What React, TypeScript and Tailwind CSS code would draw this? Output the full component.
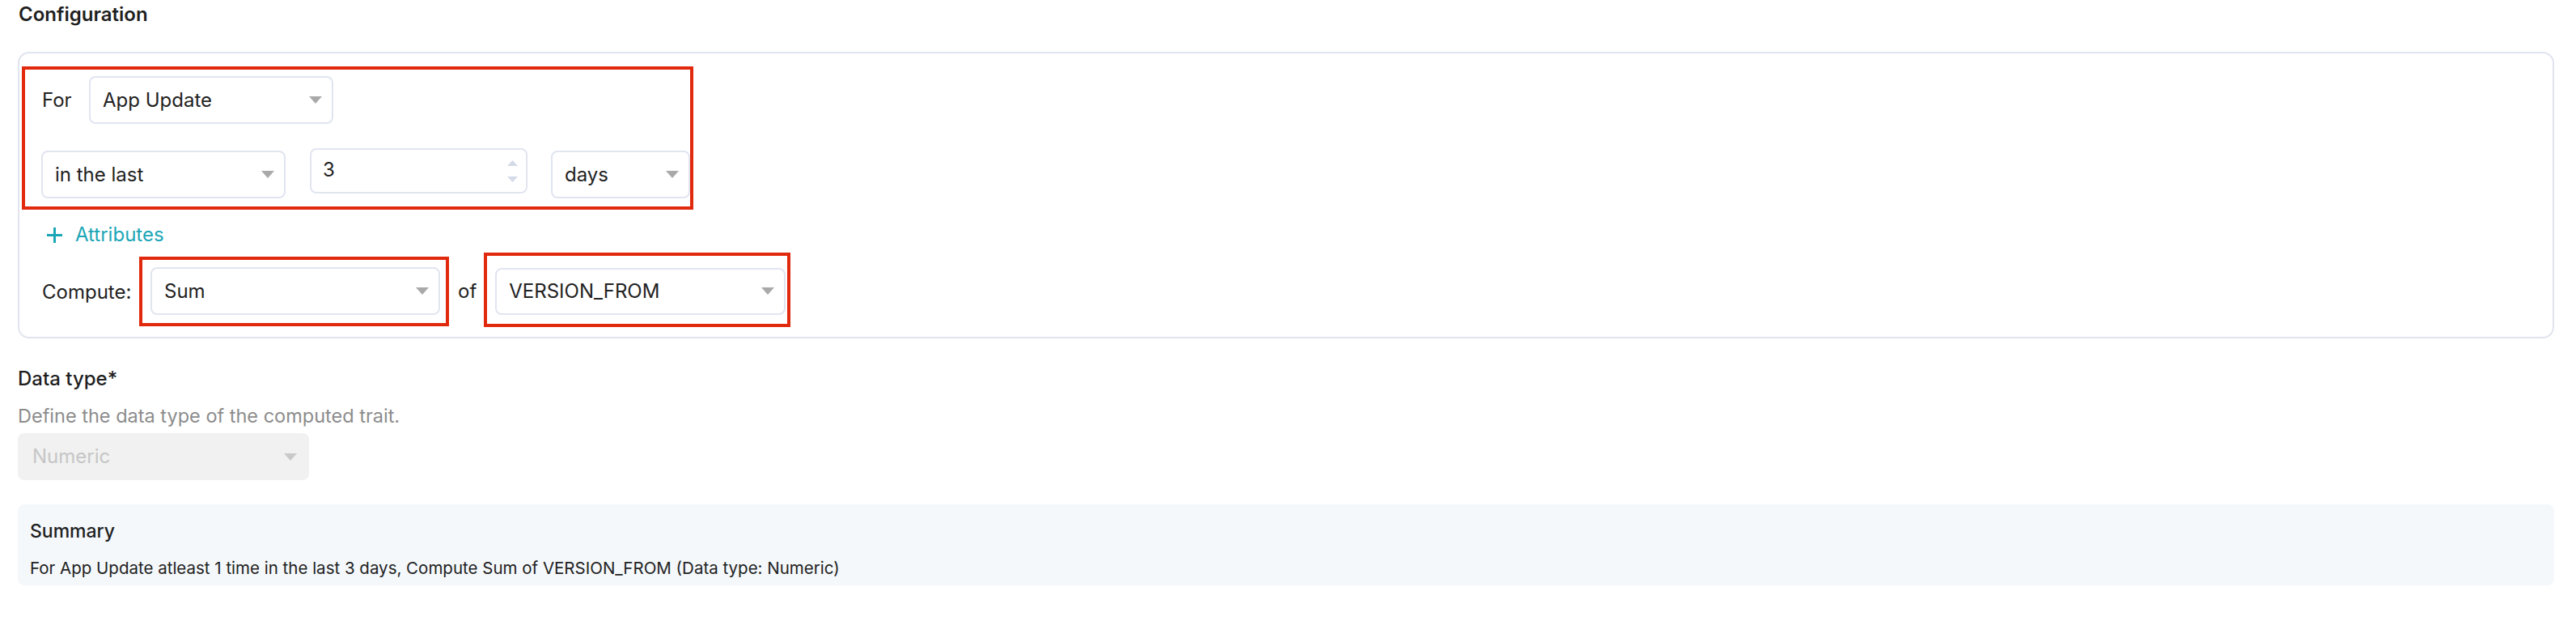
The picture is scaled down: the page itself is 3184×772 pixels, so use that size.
import React from "react";

function Caret({ color = "#a9a9a9" }: { color?: string }) {
  return (
    <svg width="16" height="9" viewBox="0 0 16 9" className="shrink-0">
      <polygon points="0,0 16,0 8,9" fill={color} />
    </svg>
  );
}

function Select({ value, className }: { value: string; className: string }) {
  return (
    <div
      className={`flex items-center justify-between border-2 border-[#e1e5f0] rounded-[8px] bg-white pl-[15px] pr-[12px] text-[24px] text-[#222222] ${className}`}
    >
      <span className="leading-[30px]">{value}</span>
      <Caret />
    </div>
  );
}

export default function App() {
  return (
    <div className="w-[3184px] h-[772px] bg-white font-['Inter',sans-serif] text-[#222222]">
      <div className="pl-[22px] pr-[27px] pt-[2px]">
        <h2 className="pl-[1px] text-[24px] leading-[32px] font-semibold text-[#1f1f1f]">Configuration</h2>

        {/* Card */}
        <div className="mt-[30px] h-[354px] border-2 border-[#e0e4ef] rounded-[14px] flex flex-col">
          {/* Red annotated group */}
          <div className="ml-[3px] mt-[16px] w-[830px] h-[177px] border-4 border-[#e1290d] pl-[20px] pt-[8px]">
            <div className="flex items-center">
              <span className="w-[59px] pl-[1px] text-[24px] leading-[30px]">For</span>
              <Select value="App Update" className="w-[302px] h-[59px]" />
            </div>
            <div className="mt-[33px] flex items-start">
              <Select value="in the last" className="w-[302px] h-[59px]" />
              <div className="ml-[30px] -mt-[3px] w-[269px] h-[56px] border-2 border-[#e1e5f0] rounded-[8px] bg-white flex items-center justify-between pl-[14px] pr-[10px]">
                <span className="text-[24px] leading-[30px] -mt-[2px]">3</span>
                <div className="flex flex-col gap-[13px]">
                  <svg width="13" height="7" viewBox="0 0 13 7">
                    <polygon points="6.5,0 13,7 0,7" fill="#d4dae7" />
                  </svg>
                  <svg width="13" height="7" viewBox="0 0 13 7">
                    <polygon points="0,0 13,0 6.5,7" fill="#d4dae7" />
                  </svg>
                </div>
              </div>
              <Select value="days" className="ml-[29px] w-[172px] h-[59px]" />
            </div>
          </div>

          {/* Attributes */}
          <div className="mt-[16px] ml-[34px] flex items-center h-[30px]">
            <svg width="19" height="19" viewBox="0 0 19 19" className="shrink-0">
              <line x1="9.5" y1="0" x2="9.5" y2="19" stroke="#1ba6b6" strokeWidth="3" />
              <line x1="0" y1="9.5" x2="19" y2="9.5" stroke="#1ba6b6" strokeWidth="3" />
            </svg>
            <span className="ml-[16px] text-[24px] leading-[30px] text-[#1ba6b6]">Attributes</span>
          </div>

          {/* Compute row */}
          <div className="mt-[25px] ml-[28px] flex items-center h-[59px]">
            <span className="w-[134px] text-[24px] leading-[30px] mt-[3px]">Compute:</span>
            <div className="relative">
              <Select value="Sum" className="w-[358px] h-[59px]" />
              <div className="absolute -left-[14px] -right-[11px] -top-[13px] -bottom-[14px] border-4 border-[#e1290d] pointer-events-none" />
            </div>
            <span className="ml-[22px] text-[24px] leading-[30px] mt-[1px]">of</span>
            <div className="relative ml-[23px]">
              <Select value="VERSION_FROM" className="w-[359px] h-[58px]" />
              <div className="absolute -left-[14px] -right-[6px] -top-[19px] -bottom-[15px] border-4 border-[#e1290d] pointer-events-none" />
            </div>
          </div>
        </div>

        {/* Data type */}
        <div className="mt-[35px] text-[24px] leading-[30px] font-medium text-[#1f1f1f]">Data type*</div>
        <div className="mt-[17px] text-[23.5px] leading-[28px] text-[#8c8c8c]">Define the data type of the computed trait.</div>
        <div className="mt-[7px] w-[360px] h-[58px] rounded-[8px] bg-[#f1f1f1] flex items-center justify-between pl-[18px] pr-[15px]">
          <span className="text-[24px] leading-[30px] text-[#c6c6c6]">Numeric</span>
          <Caret color="#c9c9c9" />
        </div>

        {/* Summary */}
        <div className="mt-[30px] h-[100px] rounded-[8px] bg-[#f4f8fb] pl-[15px] pt-[18px]">
          <div className="text-[23px] leading-[30px] font-medium text-[#1f1f1f]">Summary</div>
          <div className="mt-[18px] text-[20.5px] leading-[26px] text-[#222222]">
            For App Update atleast 1 time in the last 3 days, Compute Sum of VERSION_FROM (Data type: Numeric)
          </div>
        </div>
      </div>
    </div>
  );
}
